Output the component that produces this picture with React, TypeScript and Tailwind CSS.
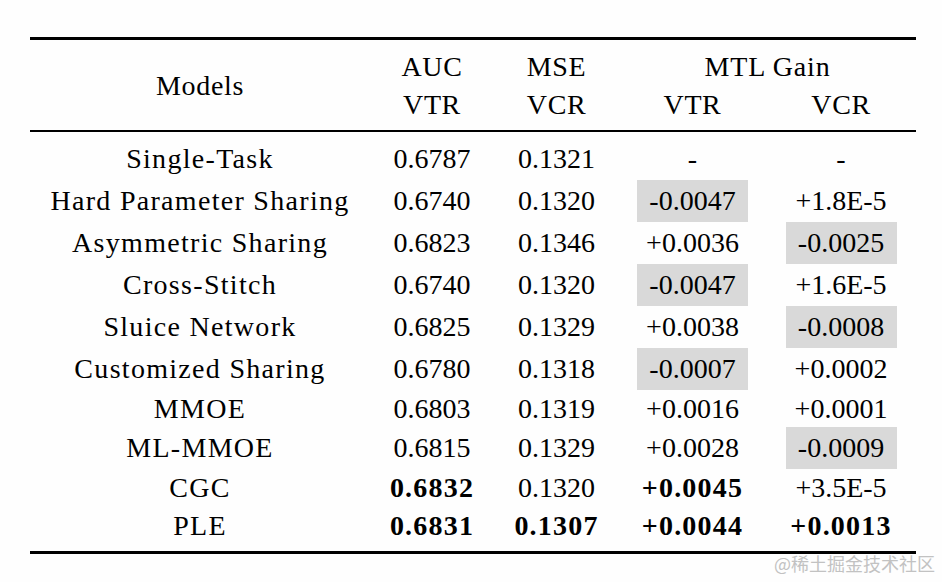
type Cell = { v: string; bold?: boolean; gray?: boolean }
type Row = { name: string; h: string; cells: Cell[] }

const rows: Row[] = [
  { name: 'Single-Task', h: 'h-[42px]', cells: [{ v: '0.6787' }, { v: '0.1321' }, { v: '-' }, { v: '-' }] },
  { name: 'Hard Parameter Sharing', h: 'h-[42px]', cells: [{ v: '0.6740' }, { v: '0.1320' }, { v: '-0.0047', gray: true }, { v: '+1.8E-5' }] },
  { name: 'Asymmetric Sharing', h: 'h-[42px]', cells: [{ v: '0.6823' }, { v: '0.1346' }, { v: '+0.0036' }, { v: '-0.0025', gray: true }] },
  { name: 'Cross-Stitch', h: 'h-[42px]', cells: [{ v: '0.6740' }, { v: '0.1320' }, { v: '-0.0047', gray: true }, { v: '+1.6E-5' }] },
  { name: 'Sluice Network', h: 'h-[42px]', cells: [{ v: '0.6825' }, { v: '0.1329' }, { v: '+0.0038' }, { v: '-0.0008', gray: true }] },
  { name: 'Customized Sharing', h: 'h-[42px]', cells: [{ v: '0.6780' }, { v: '0.1318' }, { v: '-0.0007', gray: true }, { v: '+0.0002' }] },
  { name: 'MMOE', h: 'h-[37px]', cells: [{ v: '0.6803' }, { v: '0.1319' }, { v: '+0.0016' }, { v: '+0.0001' }] },
  { name: 'ML-MMOE', h: 'h-[42px]', cells: [{ v: '0.6815' }, { v: '0.1329' }, { v: '+0.0028' }, { v: '-0.0009', gray: true }] },
  { name: 'CGC', h: 'h-[37px]', cells: [{ v: '0.6832', bold: true }, { v: '0.1320' }, { v: '+0.0045', bold: true }, { v: '+3.5E-5' }] },
  { name: 'PLE', h: 'h-[39px]', cells: [{ v: '0.6831', bold: true }, { v: '0.1307', bold: true }, { v: '+0.0044', bold: true }, { v: '+0.0013', bold: true }] },
]

const cols = 'grid grid-cols-[340px_124px_125px_147px_150px]'
const head = 'h-[38px] flex items-center justify-center tracking-[0.6px]'

const App = () => {
  return (
    <div className="relative w-[942px] h-[582px] bg-[#fefefe] text-black font-['Liberation_Serif','Times_New_Roman',serif]">
      <div className="ml-[30px] w-[886px] pt-[37px] text-[28px] leading-none">
        {/* header */}
        <div className={`${cols} border-t-[3px] border-b-2 border-black pt-[8px] pb-[6px]`}>
          <div className="row-span-2 flex items-center justify-center tracking-[0.7px]">Models</div>
          <div className={head}>AUC</div>
          <div className={head}>MSE</div>
          <div className="col-span-2 h-[38px] flex items-center justify-center tracking-[0.8px]">MTL Gain</div>
          <div className={head}>VTR</div>
          <div className={head}>VCR</div>
          <div className={head}>VTR</div>
          <div className={head}>VCR</div>
        </div>

        {/* body */}
        <div className="pt-[6px] pb-[6px] border-b-[3px] border-black">
          {rows.map((row) => (
            <div key={row.name} className={`${cols} ${row.h}`}>
              <div className="flex items-center justify-center tracking-[1.3px]">{row.name}</div>
              {row.cells.map((c, i) => (
                <div key={i} className="flex items-center justify-center">
                  <div
                    className={`h-full flex items-center justify-center ${c.gray ? 'w-[111px] bg-[#d9d9d9]' : ''} ${c.bold ? 'font-bold tracking-[1.2px]' : ''}`}
                  >
                    {c.v}
                  </div>
                </div>
              ))}
            </div>
          ))}
        </div>
      </div>

      {/* watermark */}
      <div className="absolute right-[7px] top-[554px] whitespace-nowrap text-[18px] leading-none text-[#c2c2c2] font-['Noto_Sans_CJK_SC','Noto_Sans',sans-serif]">
        @稀土掘金技术社区
      </div>
    </div>
  )
}

export default App
